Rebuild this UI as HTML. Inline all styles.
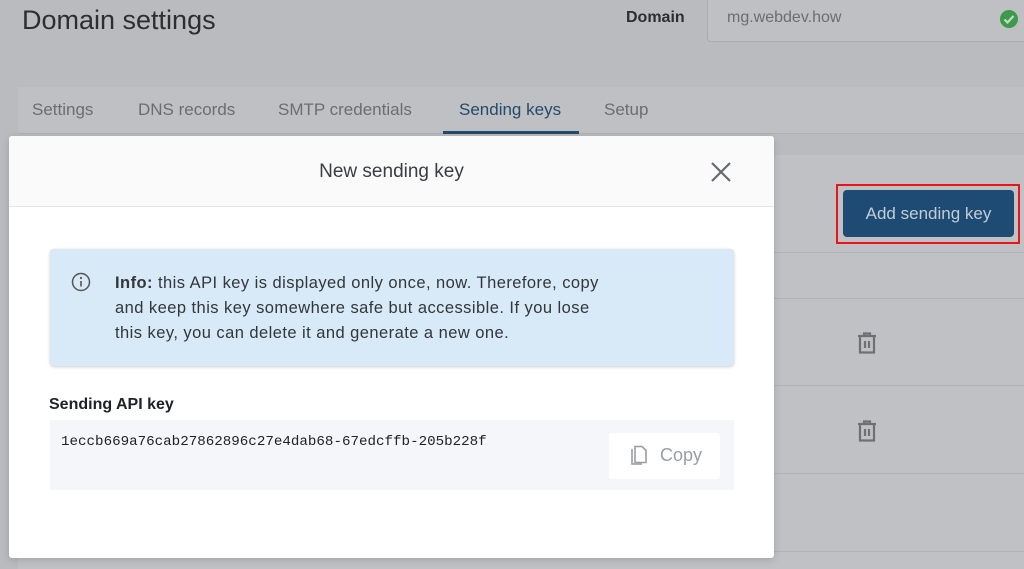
<!DOCTYPE html>
<html><head><meta charset="utf-8"><style>
*{margin:0;padding:0;box-sizing:border-box}
body{width:1024px;height:569px;overflow:hidden;background:#babbbf;font-family:"Liberation Sans",sans-serif;position:relative}
.a{position:absolute}
</style></head><body>
<div class="a" style="left:22px;top:5px;font-size:27px;color:#2b2e33">Domain settings</div>
<div class="a" style="left:626px;top:9px;font-size:16px;font-weight:bold;color:#2b2e33">Domain</div>
<div class="a" style="left:707px;top:-4px;width:330px;height:46px;background:#bfc0c4;border:1px solid #aaacb0;border-radius:4px"></div>
<div class="a" style="left:727px;top:9px;font-size:16px;color:#6a6d72">mg.webdev.how</div>
<svg class="a" style="left:999px;top:9px" width="20" height="20"><circle cx="10" cy="10" r="9" fill="#3c9a4a"/><path d="M5.5 10.5l3 3 6-6.5" stroke="#c8d8c8" stroke-width="2.2" fill="none"/></svg>
<div class="a" style="left:18px;top:87px;width:1006px;height:47px;background:#bec0c3;border-bottom:1px solid #b0b2b6"></div>
<div class="a" style="left:32px;top:100px;font-size:17px;color:#6a6d72">Settings</div>
<div class="a" style="left:138px;top:100px;font-size:17px;color:#6a6d72">DNS records</div>
<div class="a" style="left:278px;top:100px;font-size:17px;color:#6a6d72">SMTP credentials</div>
<div class="a" style="left:459px;top:100px;font-size:17px;color:#244a6c">Sending keys</div>
<div class="a" style="left:443px;top:131px;width:136px;height:3px;background:#244a6c"></div>
<div class="a" style="left:604px;top:100px;font-size:17px;color:#6a6d72">Setup</div>
<div class="a" style="left:18px;top:155px;width:1006px;height:414px;background:#c0c1c5"></div>
<div class="a" style="left:18px;top:252px;width:1006px;height:1px;background:#b0b2b6"></div>
<div class="a" style="left:18px;top:298px;width:1006px;height:1px;background:#b0b2b6"></div>
<div class="a" style="left:18px;top:385px;width:1006px;height:1px;background:#b0b2b6"></div>
<div class="a" style="left:18px;top:473px;width:1006px;height:1px;background:#b0b2b6"></div>
<div class="a" style="left:18px;top:551px;width:1006px;height:1px;background:#b0b2b6"></div>
<div class="a" style="left:836px;top:184px;width:184px;height:60px;border:2px solid #e8161b"></div>
<div class="a" style="left:843px;top:190px;width:171px;height:47px;background:#1d4b74;border-radius:4px;color:#c4ccd6;font-size:17px;line-height:47px;text-align:center">Add sending key</div>
<svg class="a" style="left:856px;top:331px" width="22" height="24"><path d="M2 5h18M8 5V2.5h6V5M4 5v16.5h14V5M9 10v7M13 10v7" stroke="#6d7076" stroke-width="2.2" fill="none"/></svg>
<svg class="a" style="left:856px;top:419px" width="22" height="24"><path d="M2 5h18M8 5V2.5h6V5M4 5v16.5h14V5M9 10v7M13 10v7" stroke="#6d7076" stroke-width="2.2" fill="none"/></svg>
<div class="a" style="left:9px;top:136px;width:765px;height:422px;background:#fff;border-radius:3px;box-shadow:0 2px 8px rgba(0,0,0,.15)">
<div class="a" style="left:0;top:0;width:765px;height:71px;background:#fafafa;border-bottom:1px solid #e4e5e7;border-radius:3px 3px 0 0"></div>
<div class="a" style="left:0;top:25px;width:765px;text-align:center;font-size:19px;color:#3a3d42">New sending key</div>
<svg class="a" style="left:700px;top:24px" width="24" height="24"><path d="M3 3l18 18M21 3L3 21" stroke="#666a70" stroke-width="2.2"/></svg>
<div class="a" style="left:41px;top:113px;width:684px;height:117px;background:#d8e9f7;border-radius:4px;box-shadow:0 1px 3px rgba(0,0,0,.2)"></div>
<svg class="a" style="left:62px;top:136px" width="20" height="20"><circle cx="10" cy="10" r="8.5" stroke="#555" stroke-width="1.5" fill="none"/><path d="M10 9v5.5" stroke="#555" stroke-width="1.6"/><circle cx="10" cy="6" r="1.1" fill="#555"/></svg>
<div class="a" style="left:106px;top:135px;font-size:16.5px;letter-spacing:0.45px;line-height:25px;color:#33363b;white-space:nowrap"><b>Info:</b> this API key is displayed only once, now. Therefore, copy<br>and keep this key somewhere safe but accessible. If you lose<br>this key, you can delete it and generate a new one.</div>
<div class="a" style="left:40px;top:260px;font-size:16px;font-weight:bold;color:#1e2126">Sending API key</div>
<div class="a" style="left:41px;top:284px;width:684px;height:70px;background:#f4f6f9"></div>
<div class="a" style="left:52px;top:298px;font-family:'Liberation Mono',monospace;font-size:14.2px;color:#222">1eccb669a76cab27862896c27e4dab68-67edcffb-205b228f</div>
<div class="a" style="left:600px;top:297px;width:111px;height:46px;background:#fff;border-radius:3px"></div>
<svg class="a" style="left:619px;top:309px" width="20" height="22"><path d="M4 4v15h10" stroke="#9a9da2" stroke-width="1.6" fill="none"/><path d="M7 1.5h7l4 4v12H7z" stroke="#9a9da2" stroke-width="1.6" fill="none"/></svg>
<div class="a" style="left:651px;top:309px;font-size:18px;color:#9a9da2">Copy</div>
</div>
</body></html>
